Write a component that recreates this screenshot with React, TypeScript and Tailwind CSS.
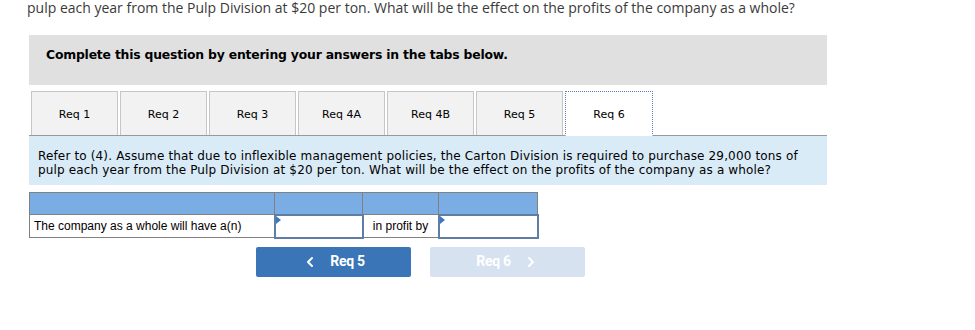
import { ChevronLeft, ChevronRight } from 'lucide-react';

const tabs = ['Req 1', 'Req 2', 'Req 3', 'Req 4A', 'Req 4B', 'Req 5', 'Req 6'];

function Flag() {
  return <span className="absolute left-0 top-0 w-0 h-0 border-t-[4px] border-b-[4px] border-l-[5px] border-t-transparent border-b-transparent border-l-[#3b78c4]" />;
}

export default function App() {
  return (
    <div className="w-[975px] h-[330px] bg-white relative overflow-hidden">
      <p className="pl-[27px] text-[14px] leading-[16px] text-[#3a3a3a] font-['Open_Sans',sans-serif]">
        pulp each year from the Pulp Division at $20 per ton. What will be the effect on the profits of the company as a whole?
      </p>

      <div className="ml-[29px] mt-[19px] w-[798px] h-[50px] bg-[#e0e0e0] pl-[17px] pt-[11px]">
        <p className="text-[12.4px] font-bold text-black font-['DejaVu_Sans',Verdana,sans-serif] tracking-[-0.2px]">
          Complete this question by entering your answers in the tabs below.
        </p>
      </div>

      <div className="ml-[29px] mt-[6px] w-[798px]">
        <div className="flex items-end gap-[2px] pl-[2px] border-b border-[#999] h-[45px]">
          {tabs.map((t, i) =>
            i === 6 ? (
              <div
                key={t}
                className="w-[88px] h-[45px] -mb-px pt-[3px] bg-white border border-dotted border-[#5b7fb0] border-b-white flex items-center justify-center text-[11px] text-black font-['DejaVu_Sans',Verdana,sans-serif]"
              >
                {t}
              </div>
            ) : (
              <div
                key={t}
                className="w-[87px] h-[44px] pt-[3px] bg-[#f2f2f2] border border-[#c6c6c6] border-b-0 flex items-center justify-center text-[11px] text-black font-['DejaVu_Sans',Verdana,sans-serif]"
              >
                {t}
              </div>
            )
          )}
        </div>

        <div className="bg-[#daebf8] h-[49px] pl-[9px] pt-[13px] text-[12px] leading-[14px] text-black font-['DejaVu_Sans',Verdana,sans-serif] tracking-[0.15px]">
          <p>Refer to (4). Assume that due to inflexible management policies, the Carton Division is required to purchase 29,000 tons of</p>
          <p>pulp each year from the Pulp Division at $20 per ton. What will be the effect on the profits of the company as a whole?</p>
        </div>

        <table className="mt-[7px] border-collapse font-['Liberation_Sans',Arial,sans-serif] text-[12px] text-black">
          <tbody>
            <tr className="h-[22px] bg-[#7aade3]">
              <td className="w-[245px] border border-[#808080]" />
              <td className="w-[88px] border border-[#808080]" />
              <td className="w-[76px] border border-[#808080]" />
              <td className="w-[99px] border border-[#808080]" />
            </tr>
            <tr className="h-[23px]">
              <td className="border border-[#808080] pl-[4px]">The company as a whole will have a(n)</td>
              <td className="relative border-2 border-[#5f7ea6] p-0">
                <Flag />
              </td>
              <td className="border border-[#808080] text-center">in profit by</td>
              <td className="relative border-2 border-[#5f7ea6] p-0">
                <Flag />
              </td>
            </tr>
          </tbody>
        </table>
      </div>

      <div className="flex gap-[19px] ml-[256px] mt-[8px]">
        <div className="w-[155px] h-[30px] bg-[#3a75b8] rounded-[2px] flex items-center justify-center gap-[12px] text-white font-bold text-[14px] font-['Roboto',sans-serif] tracking-[-0.3px]">
          <ChevronLeft size={16} strokeWidth={3} />
          <span>Req 5</span>
        </div>
        <div className="w-[155px] h-[30px] bg-[#d6e2f0] rounded-[2px] flex items-center justify-center gap-[12px] text-white font-bold text-[14px] font-['Roboto',sans-serif] tracking-[-0.3px]">
          <span>Req 6</span>
          <ChevronRight size={16} strokeWidth={3} />
        </div>
      </div>
    </div>
  );
}
